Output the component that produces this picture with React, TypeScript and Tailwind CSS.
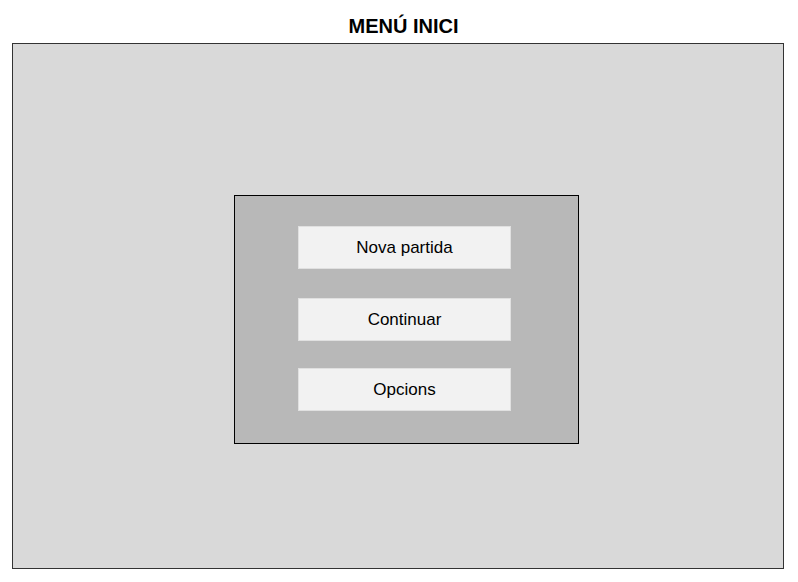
const options = ["Nova partida", "Continuar", "Opcions"];

export default function App() {
  return (
    <div
      className="w-[798px] h-[582px] bg-white flex flex-col"
      style={{ fontFamily: '"Liberation Sans", Arial, sans-serif' }}
    >
      {/* títol */}
      <h1 className="h-[43px] pt-[14px] pl-[9px] text-center text-[20px] leading-[24px] font-bold text-black">
        MENÚ INICI
      </h1>

      {/* pantalla */}
      <div className="ml-[12px] w-[772px] h-[526px] border border-[#333] bg-[#d9d9d9] pl-[221px] pt-[151px]">
        <div className="w-[345px] h-[249px] border border-black bg-[#b8b8b8] pl-[63px] pt-[30px] flex flex-col">
          {options.map((label, i) => (
            <div
              key={label}
              className={`w-[213px] h-[43px] pt-[1px] border border-[#e0e0e0] bg-[#f2f2f2] flex items-center justify-center text-[17px] text-black ${
                i === 1 ? "mt-[29px]" : i === 2 ? "mt-[27px]" : ""
              }`}
            >
              {label}
            </div>
          ))}
        </div>
      </div>
    </div>
  );
}
